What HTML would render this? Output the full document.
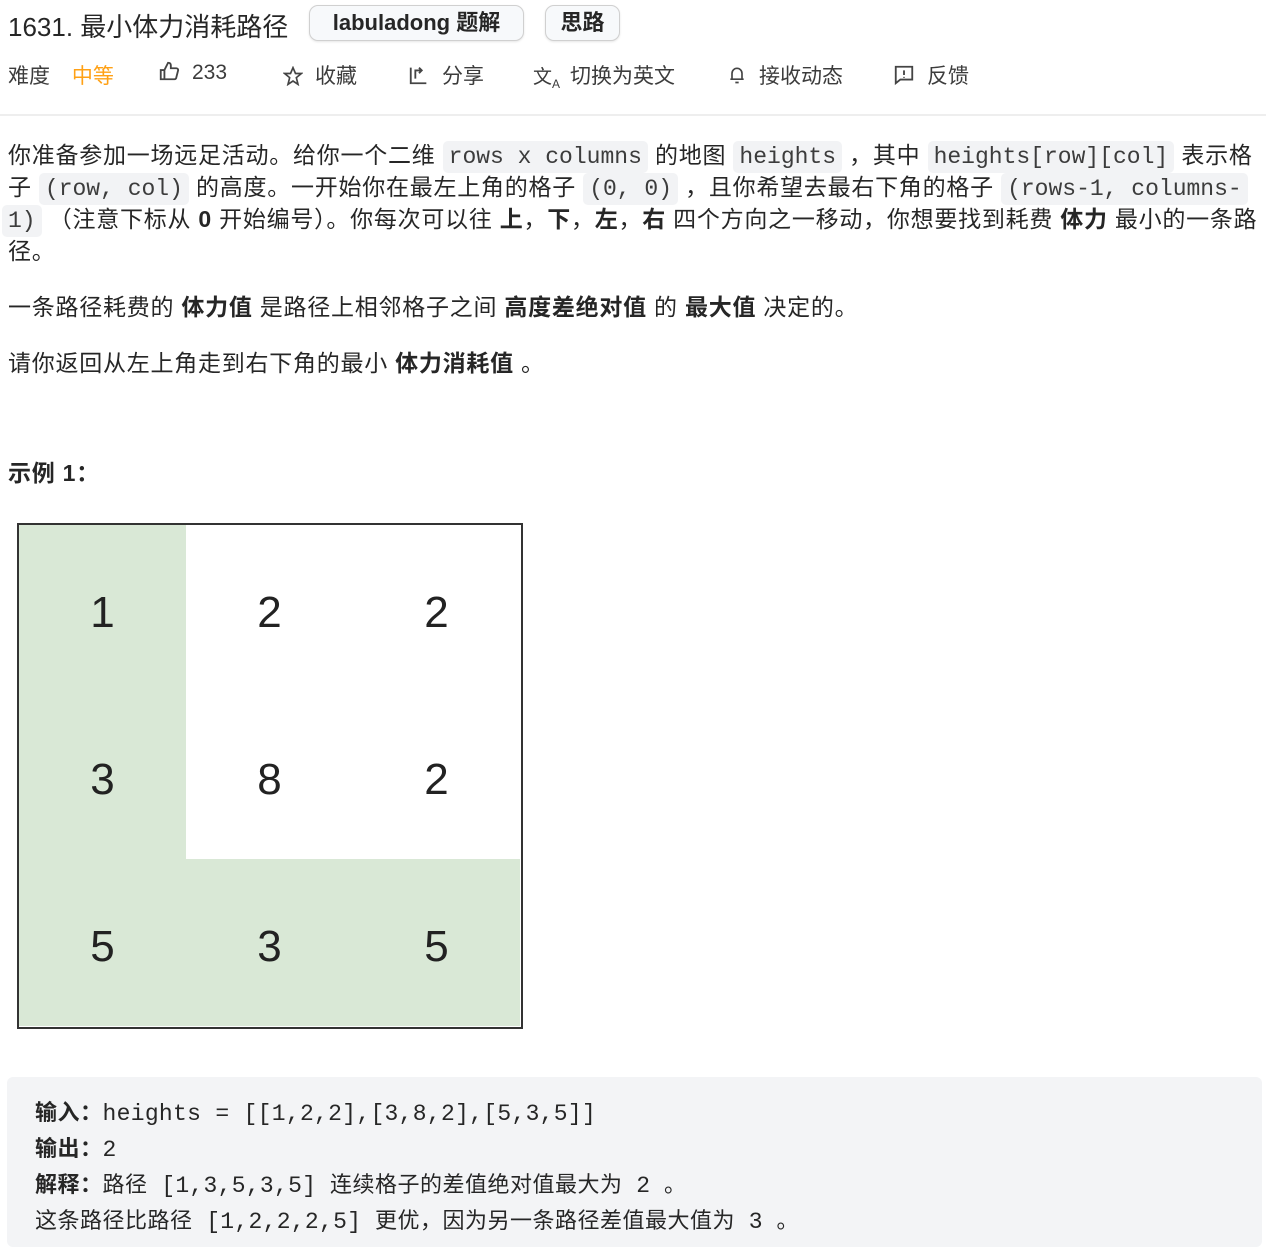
<!DOCTYPE html>
<html><head><meta charset="utf-8"><style>
body{margin:0;width:1266px;height:1240px;background:#fff;overflow:hidden;font-family:"Liberation Sans","Noto Sans CJK SC",sans-serif;color:#262626;position:relative}
.a{position:absolute;white-space:nowrap}
.t{font-size:26px;top:7px;left:8px;color:#262626}
.pill{position:absolute;top:5px;height:34px;border:1px solid #d0d0d0;border-radius:9px;background:#f7f9fb;font-size:22px;font-weight:bold;line-height:34px;text-align:center;box-shadow:0 1px 2px rgba(0,0,0,.1)}
.m{font-size:21px;top:60px;color:#3c3c3c}
.m svg{vertical-align:-3px;margin-right:8px}
.p{font-size:23px;left:8px;line-height:32px;letter-spacing:0.75px}
code{font-family:"Liberation Mono",monospace;font-size:23px;letter-spacing:0;background:#f2f3f5;color:#3c3c3c;border-radius:5px;padding:3px 6px}
b{font-weight:bold}
.grid{position:absolute;left:17px;top:523px;width:502px;height:502px;border:2px solid #333}
.c{position:absolute;width:167px;height:167px;font-size:44px;line-height:175px;text-align:center;color:#222}
.g{background:#d9e8d6}
.pre{position:absolute;left:7px;top:1077px;width:1255px;height:170px;background:#f3f4f6;border-radius:6px}
.pl{position:absolute;left:35px;font-size:22px;font-family:"Liberation Mono","Noto Sans CJK SC",monospace;white-space:nowrap;letter-spacing:0.5px}
.pl span{font-size:23px;letter-spacing:0.3px}
</style></head><body>
<div class="a t">1631. 最小体力消耗路径</div>
<div class="pill" style="left:309px;width:213px">labuladong 题解</div>
<div class="pill" style="left:545px;width:73px">思路</div>
<div class="a m" style="left:8px">难度 <span style="color:#ffa116;margin-left:16px">中等</span></div>
<div class="a m" style="left:158px"><svg width="22" height="22" viewBox="0 0 24 24" fill="none" stroke="#444" stroke-width="2"><path d="M3 11h4v10H3zM7 11l4-8c2 0 3 1 3 3v3h6c1 0 2 1 2 2l-2 8c0 1-1 2-2 2H7"/></svg><span style="margin-left:4px">233</span></div>
<div class="a m" style="left:283px"><svg width="20" height="20" viewBox="0 0 24 24" fill="none" stroke="#444" stroke-width="2"><path d="M12 2l3 7h7l-6 5 2 8-6-4-6 4 2-8-6-5h7z"/></svg><span style="margin-left:4px">收藏</span></div>
<div class="a m" style="left:408px"><svg width="22" height="22" viewBox="0 0 24 24" fill="none" stroke="#444" stroke-width="2"><path d="M3 4v17h17M8 16V7h7M12 4l3 3-3 3"/></svg><span style="margin-left:4px">分享</span></div>
<div class="a m" style="left:533px"><span style="font-size:19px;margin-right:10px">文<sub style="font-size:12px">A</sub></span>切换为英文</div>
<div class="a m" style="left:727px"><svg width="20" height="22" viewBox="0 0 24 24" fill="none" stroke="#444" stroke-width="2"><path d="M6 17V10a6 6 0 0112 0v7M4 17h16M10 21h4"/></svg><span style="margin-left:4px">接收动态</span></div>
<div class="a m" style="left:893px"><svg width="22" height="22" viewBox="0 0 24 24" fill="none" stroke="#444" stroke-width="2"><path d="M3 3h18v14H8l-5 4zM12 7v5M12 14v1"/></svg><span style="margin-left:4px">反馈</span></div>
<div class="a" style="left:0;top:114px;width:1266px;height:2px;background:#eee"></div>

<div class="a p" style="top:139px">你准备参加一场远足活动。给你一个二维 <code>rows x columns</code> 的地图 <code>heights</code> ，其中 <code>heights[row][col]</code> 表示格</div>
<div class="a p" style="top:171px">子 <code>(row, col)</code> 的高度。一开始你在最左上角的格子 <code>(0, 0)</code> ，且你希望去最右下角的格子 <code>(rows-1, columns-</code></div>
<div class="a p" style="top:203px;left:2px"><code>1)</code> （注意下标从 <b>0</b> 开始编号）。你每次可以往 <b>上</b>，<b>下</b>，<b>左</b>，<b>右</b> 四个方向之一移动，你想要找到耗费 <b>体力</b> 最小的一条路</div>
<div class="a p" style="top:235px">径。</div>
<div class="a p" style="top:291px">一条路径耗费的 <b>体力值</b> 是路径上相邻格子之间 <b>高度差绝对值</b> 的 <b>最大值</b> 决定的。</div>
<div class="a p" style="top:347px">请你返回从左上角走到右下角的最小 <b>体力消耗值</b> 。</div>
<div class="a p" style="top:457px"><b>示例 1：</b></div>

<div class="grid">
<div class="c g" style="left:0;top:0">1</div><div class="c" style="left:167px;top:0">2</div><div class="c" style="left:334px;top:0">2</div>
<div class="c g" style="left:0;top:167px">3</div><div class="c" style="left:167px;top:167px">8</div><div class="c" style="left:334px;top:167px">2</div>
<div class="c g" style="left:0;top:334px">5</div><div class="c g" style="left:167px;top:334px">3</div><div class="c g" style="left:334px;top:334px">5</div>
</div>

<div class="pre"></div>
<div class="pl" style="top:1095px"><b>输入：</b><span>heights = [[1,2,2],[3,8,2],[5,3,5]]</span></div>
<div class="pl" style="top:1131px"><b>输出：</b><span>2</span></div>
<div class="pl" style="top:1167px"><b>解释：</b>路径 <span>[1,3,5,3,5]</span> 连续格子的差值绝对值最大为 <span>2</span> 。</div>
<div class="pl" style="top:1203px">这条路径比路径 <span>[1,2,2,2,5]</span> 更优，因为另一条路径差值最大值为 <span>3</span> 。</div>
</body></html>
